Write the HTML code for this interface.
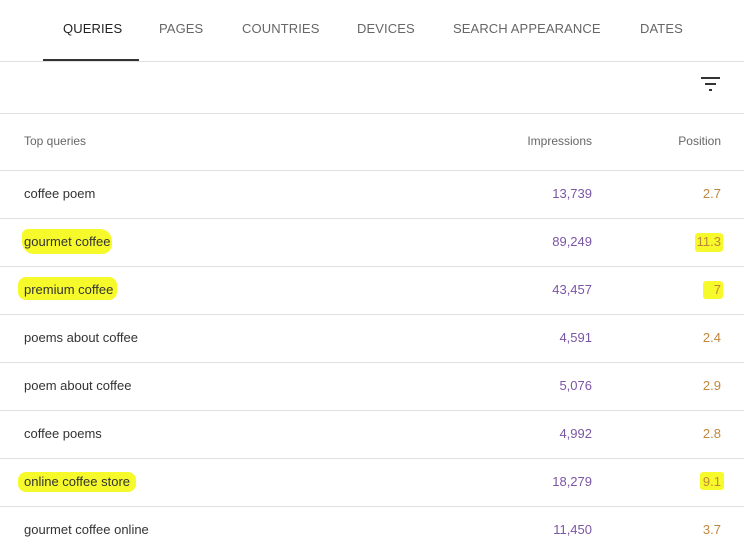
<!DOCTYPE html>
<html><head><meta charset="utf-8"><style>
body{margin:0;width:744px;height:552px;background:#fff;font-family:"Liberation Sans",Arial,sans-serif;position:relative;overflow:hidden;color:#333}
.tab{position:absolute;top:21px;font-size:13px;color:#666;letter-spacing:0.1px}
.ab{position:absolute}
.line{position:absolute;left:0;width:744px;height:1px;background:#e0e0e0}
.row{position:absolute;font-size:13px}
.q{left:24px;color:#333}
.i{right:152px;color:#7b55a6;text-align:right}
.p{right:23px;color:#c0873a;text-align:right}
.hl{position:absolute;background:#f6f92a;border-radius:8px}
</style></head><body>
<div class="tab" style="left:63px;color:#222">QUERIES</div>
<div class="tab" style="left:159px">PAGES</div>
<div class="tab" style="left:242px">COUNTRIES</div>
<div class="tab" style="left:357px">DEVICES</div>
<div class="tab" style="left:453px">SEARCH APPEARANCE</div>
<div class="tab" style="left:640px">DATES</div>
<div class="line" style="top:61px"></div>
<div class="ab" style="left:43px;top:59px;width:96px;height:2px;background:#333"></div>
<div class="ab" style="left:701px;top:77px;width:19px;height:2px;background:#333"></div>
<div class="ab" style="left:705px;top:83px;width:11px;height:2px;background:#333"></div>
<div class="ab" style="left:709px;top:89px;width:3px;height:2px;background:#333"></div>
<div class="line" style="top:113px"></div>
<div class="row" style="left:24px;top:134px;font-size:12px;color:#666">Top queries</div>
<div class="row" style="right:152px;top:134px;font-size:12px;color:#666">Impressions</div>
<div class="row" style="right:23px;top:134px;font-size:12px;color:#666">Position</div>

<div class="hl" style="left:22px;top:229px;width:90px;height:25px;border-radius:6px 12px 10px 12px"></div>
<div class="hl" style="left:18px;top:277px;width:99px;height:23px"></div>
<div class="hl" style="left:18px;top:472px;width:118px;height:20px"></div>
<div class="hl" style="left:695px;top:233px;width:28px;height:19px;border-radius:3px"></div>
<div class="hl" style="left:703px;top:281px;width:20px;height:18px;border-radius:3px"></div>
<div class="hl" style="left:700px;top:472px;width:24px;height:18px;border-radius:3px"></div>

<div class="line" style="top:170px"></div>
<div class="line" style="top:218px"></div>
<div class="line" style="top:266px"></div>
<div class="line" style="top:314px"></div>
<div class="line" style="top:362px"></div>
<div class="line" style="top:410px"></div>
<div class="line" style="top:458px"></div>
<div class="line" style="top:506px"></div>

<div class="row q" style="top:186px">coffee poem</div><div class="row i" style="top:186px">13,739</div><div class="row p" style="top:186px">2.7</div>
<div class="row q" style="top:234px">gourmet coffee</div><div class="row i" style="top:234px">89,249</div><div class="row p" style="top:234px">11.3</div>
<div class="row q" style="top:282px">premium coffee</div><div class="row i" style="top:282px">43,457</div><div class="row p" style="top:282px">7</div>
<div class="row q" style="top:330px">poems about coffee</div><div class="row i" style="top:330px">4,591</div><div class="row p" style="top:330px">2.4</div>
<div class="row q" style="top:378px">poem about coffee</div><div class="row i" style="top:378px">5,076</div><div class="row p" style="top:378px">2.9</div>
<div class="row q" style="top:426px">coffee poems</div><div class="row i" style="top:426px">4,992</div><div class="row p" style="top:426px">2.8</div>
<div class="row q" style="top:474px">online coffee store</div><div class="row i" style="top:474px">18,279</div><div class="row p" style="top:474px">9.1</div>
<div class="row q" style="top:522px">gourmet coffee online</div><div class="row i" style="top:522px">11,450</div><div class="row p" style="top:522px">3.7</div>
</body></html>
